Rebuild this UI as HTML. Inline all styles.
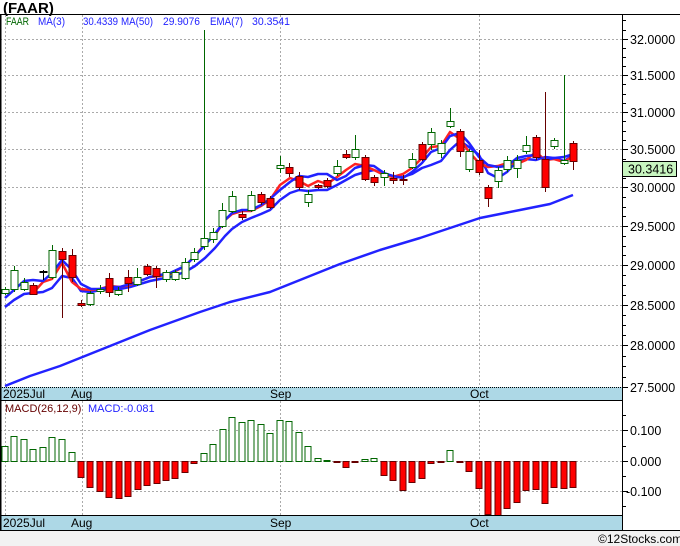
<!DOCTYPE html>
<html><head><meta charset="utf-8">
<style>
html,body{margin:0;padding:0;background:#fff;}
body{width:680px;height:546px;overflow:hidden;position:relative;font-family:"Liberation Sans",sans-serif;}
svg text{font-family:"Liberation Sans","DejaVu Sans",sans-serif;}
</style></head><body>
<svg id="s" width="680" height="546" xmlns="http://www.w3.org/2000/svg" style="position:absolute;left:0;top:0">
<rect x="0" y="531" width="680" height="15" fill="#f2f2f2"/>
<text x="3" y="13" font-size="15" font-weight="bold" fill="#000">(FAAR)</text>
<rect x="0" y="387" width="622" height="13" fill="#add8e6"/>
<rect x="0" y="516" width="622" height="14" fill="#add8e6"/>
<g id="g"></g>
<line x1="0" y1="14.5" x2="680" y2="14.5" stroke="#000"/>
<line x1="0" y1="400.5" x2="622" y2="400.5" stroke="#000"/>
<line x1="0" y1="515.5" x2="622" y2="515.5" stroke="#000"/>
<line x1="0" y1="530.5" x2="680" y2="530.5" stroke="#000"/>
<line x1="622.5" y1="14" x2="622.5" y2="531" stroke="#000"/>
<line x1="0.5" y1="14" x2="0.5" y2="531" stroke="#000" stroke-width="2"/>
<g font-size="11">
<text x="6" y="25" fill="#060" textLength="23" lengthAdjust="spacingAndGlyphs">FAAR</text>
<text x="38" y="25" fill="#22f" textLength="27" lengthAdjust="spacingAndGlyphs">MA(3)</text>
<text x="83" y="25" fill="#22f" textLength="35" lengthAdjust="spacingAndGlyphs">30.4339</text>
<text x="121" y="25" fill="#22f" textLength="32" lengthAdjust="spacingAndGlyphs">MA(50)</text>
<text x="163" y="25" fill="#22f" textLength="37" lengthAdjust="spacingAndGlyphs">29.9076</text>
<text x="210" y="25" fill="#22f" textLength="33" lengthAdjust="spacingAndGlyphs">EMA(7)</text>
<text x="252" y="25" fill="#22f" textLength="38" lengthAdjust="spacingAndGlyphs">30.3541</text>
</g>
<text x="5" y="412" font-size="11" fill="#600">MACD(26,12,9)</text>
<text x="88" y="412" font-size="11" fill="#22f">MACD:-0.081</text>
<g font-size="12" fill="#000">
<text x="3" y="398">2025Jul</text><text x="71" y="398">Aug</text><text x="270" y="398">Sep</text><text x="470" y="398">Oct</text>
<text x="3" y="527">2025Jul</text><text x="71" y="527">Aug</text><text x="270" y="527">Sep</text><text x="470" y="527">Oct</text>
</g>
<text x="598" y="543" font-size="12" fill="#000">©12Stocks.com</text>
</svg>
<script>
var g=document.getElementById('g'),NS='http://www.w3.org/2000/svg';
function el(t,a){var e=document.createElementNS(NS,t);for(var k in a)e.setAttribute(k,a[k]);g.appendChild(e);return e;}
var lbl=['32.0000','31.5000','31.0000','30.5000','30.0000','29.5000','29.0000','28.5000','28.0000','27.5000'];
var GY=[39,75,112,149,187,226,265,305,345,387];
for(var i=0;i<10;i++){var y=GY[i]+0.5;
 el('line',{x1:0,y1:y,x2:622,y2:y,stroke:i==9?'#000':'#aaa','stroke-dasharray':i==9?'1,1':'2,2'});
 el('line',{x1:622,y1:y,x2:628,y2:y,stroke:'#000'});
 if(i<9){var d=(GY[i+1]-GY[i])/4;for(var j=1;j<4;j++)el('line',{x1:622,y1:Math.round(GY[i]+d*j)+.5,x2:626,y2:Math.round(GY[i]+d*j)+.5,stroke:'#000'});}
 var t=el('text',{x:630,y:y+4.5,'font-size':12.5,fill:'#000'});t.textContent=lbl[i];}
el('line',{x1:622,y1:20.5,x2:626,y2:20.5,stroke:'#000'});el('line',{x1:622,y1:30.5,x2:626,y2:30.5,stroke:'#000'});
[[430,'0.100'],[461,'0.000'],[491,'-0.100']].forEach(function(a){var y=a[0]+0.5;
 el('line',{x1:0,y1:y,x2:622,y2:y,stroke:'#aaa','stroke-dasharray':'2,2'});
 el('line',{x1:622,y1:y,x2:628,y2:y,stroke:'#000'});
 var t=el('text',{x:a[1][0]=='-'?626:630,y:y+4.5,'font-size':12.5,fill:'#000'});t.textContent=a[1];});
[415,446,476,506].forEach(function(y){el('line',{x1:622,y1:y+.5,x2:626,y2:y+.5,stroke:'#000'});});
[5.5,82.5,280.5,479.5].forEach(function(x){
 el('line',{x1:x,y1:15,x2:x,y2:387,stroke:'#aaa','stroke-dasharray':'2,2'});
 el('line',{x1:x,y1:401,x2:x,y2:515,stroke:'#aaa','stroke-dasharray':'2,2'});});
var C=[[5,289,293,287,295,'g'],[14,270,289,266,292,'g'],[24,282,289,278,291,'g'],[33,285,294,283,295,'r'],[43,271,272,270,280,'k'],
[52,250,277,245,279,'g'],[62,251,259,248,318,'r'],[72,255,277,249,282,'r'],[81,303,305,300,307,'r'],[90,293,304,291,306,'g'],
[100,289,291,285,294,'g'],[109,278,292,273,297,'r'],[118,290,294,287,296,'g'],[128,277,283,270,292,'r'],[137,277,284,268,286,'g'],
[147,266,274,264,276,'r'],[156,268,276,266,288,'r'],[166,272,279,270,282,'g'],[175,272,279,270,281,'g'],[185,262,278,258,280,'g'],
[194,252,259,248,262,'g'],[204,238,246,30,250,'g'],[213,232,239,228,243,'g'],[222,210,226,203,228,'g'],[232,196,211,191,213,'g'],
[242,214,217,211,220,'r'],[251,195,210,191,212,'g'],[261,194,202,192,205,'r'],[270,198,207,196,209,'r'],[280,165,168,156,173,'g'],
[289,167,173,163,177,'r'],[299,176,187,172,190,'r'],[308,194,202,190,207,'g'],[318,185,187,184,189,'r'],[327,180,186,178,188,'r'],[337,166,173,160,176,'g'],
[346,154,157,150,159,'r'],[355,149,157,135,160,'g'],[365,157,179,155,181,'r'],[374,177,182,175,186,'r'],[384,173,177,170,186,'g'],
[393,178,180,172,184,'r'],[403,179,180,175,185,'r'],[412,159,167,153,169,'g'],[422,144,159,142,161,'r'],[431,132,144,128,150,'g'],
[441,143,153,140,158,'g'],[450,121,126,108,128,'g'],[460,131,151,129,157,'r'],[469,151,169,149,172,'g'],[479,160,172,150,175,'r'],
[488,187,198,185,207,'r'],[498,170,181,167,188,'g'],[507,160,169,156,172,'g'],[517,160,168,155,178,'g'],[526,145,151,136,154,'g'],
[536,137,157,135,160,'r'],[545,159,187,92,192,'r'],[554,140,146,138,149,'g'],[564,160,163,75,165,'g'],[573,143,161,141,170,'r']];
function pl(pts,c,w){el('polyline',{points:pts,fill:'none',stroke:c,'stroke-width':w,'stroke-linejoin':'round'});}
pl('5,386 30,376 60,366 100,350 150,330 200,312 230,302 270,292 300,280 340,264 380,250 420,238 450,228 480,218 520,210 550,204 573,195','#22f',2.5);
pl('5,307 14,300 24,294 33,293 43,292 52,288 62,276 72,278 81,291 91,292 100,290 110,289 120,289 130,287 140,284 150,281 160,279 170,277 185,272 195,266 205,258 215,248 225,236 232,229 242,222 251,218 261,214 270,210 280,200 290,193 299,190 308,191 318,190 327,190 337,185 346,180 355,175 365,172 374,170 384,174 393,176 403,177 412,174 422,168 431,165 441,161 450,150 460,141 469,147 479,155 488,173 498,178 507,172 517,161 526,159 536,160 545,157 554,158 564,161 573,155','#22f',2.5);
pl('33,293 43,282 52,279 62,263 72,282 81,289 91,290 100,289 110,286 120,287 130,285 140,281 150,277 160,276 170,274 185,266 195,256 205,244 215,235 225,220 232,214 242,211 251,211 261,206 270,200 280,185 290,178 299,181 308,186 318,181 327,184 337,177 346,170 355,164 365,166 374,170 384,175 393,177 403,174 412,168 422,158 431,147 441,146 450,132 460,139 469,152 479,163 488,167 498,166 507,163 517,164 526,160 536,152 545,160 554,159 564,162 573,156','#f22',2.5);
pl('5,298 14,290 24,281 33,280 43,281 52,273 62,260 72,270 81,284 91,289 100,289 110,287 120,287 130,284 140,281 150,277 160,275 170,273 185,266 195,256 205,245 215,234 225,220 232,213 242,210 251,210 261,205 270,199 280,190 290,182 299,176 308,177 318,174 327,174 337,180 346,176 355,168 365,165 374,166 384,173 393,176 403,178 412,172 422,163 431,152 441,148 450,136 460,133 469,143 479,157 488,165 498,167 507,166 517,158 526,156 536,155 545,160 554,158 564,157 573,154','#22f',2.5);
C.forEach(function(c){var x=c[0],col=c[5]=='g'?'#060':(c[5]=='r'?'#600':'#000');
 el('line',{x1:x+.5,y1:c[3],x2:x+.5,y2:c[4],stroke:col});
 var h=Math.max(c[2]-c[1],1);
 el('rect',{x:x-3,y:c[1]+.5,width:7,height:h,fill:c[5]=='r'?'#f00':'#fff',stroke:col});});
var M=[[5,446],[14,436],[24,439],[33,449],[43,447],[52,437],[62,439],[72,452],[81,477],[90,487],[100,491],[109,497],[119,498],[128,496],[138,489],[147,485],[157,483],[166,480],[175,478],[185,472],[194,463],[204,453],[213,444],[223,429],[232,417],[242,422],[251,420],[261,424],[270,433],[280,420],[289,421],[299,432],[308,446],[318,458],[327,460],[337,462],[346,467],[355,462],[365,459],[374,458],[384,475],[393,480],[403,490],[412,482],[422,478],[431,463],[441,462],[450,450],[460,462],[469,471],[479,488],[488,514],[498,515],[507,508],[517,502],[526,490],[536,489],[545,503],[554,487],[564,488],[573,487]];
M.forEach(function(m){var x=m[0],z=461,v=m[1];
 if(v<z) el('rect',{x:x-3,y:v+.5,width:6,height:z-v,fill:'#fff',stroke:'#060'});
 else el('rect',{x:x-3,y:z+.5,width:6,height:Math.max(v-z,1),fill:'#f00',stroke:'#600'});});
el('rect',{x:622.5,y:161.5,width:54,height:15,fill:'#c8f5c0',stroke:'#000'});
var t=el('text',{x:628,y:173.5,'font-size':12.5,fill:'#000'});t.textContent='30.3416';
</script>
</body></html>
